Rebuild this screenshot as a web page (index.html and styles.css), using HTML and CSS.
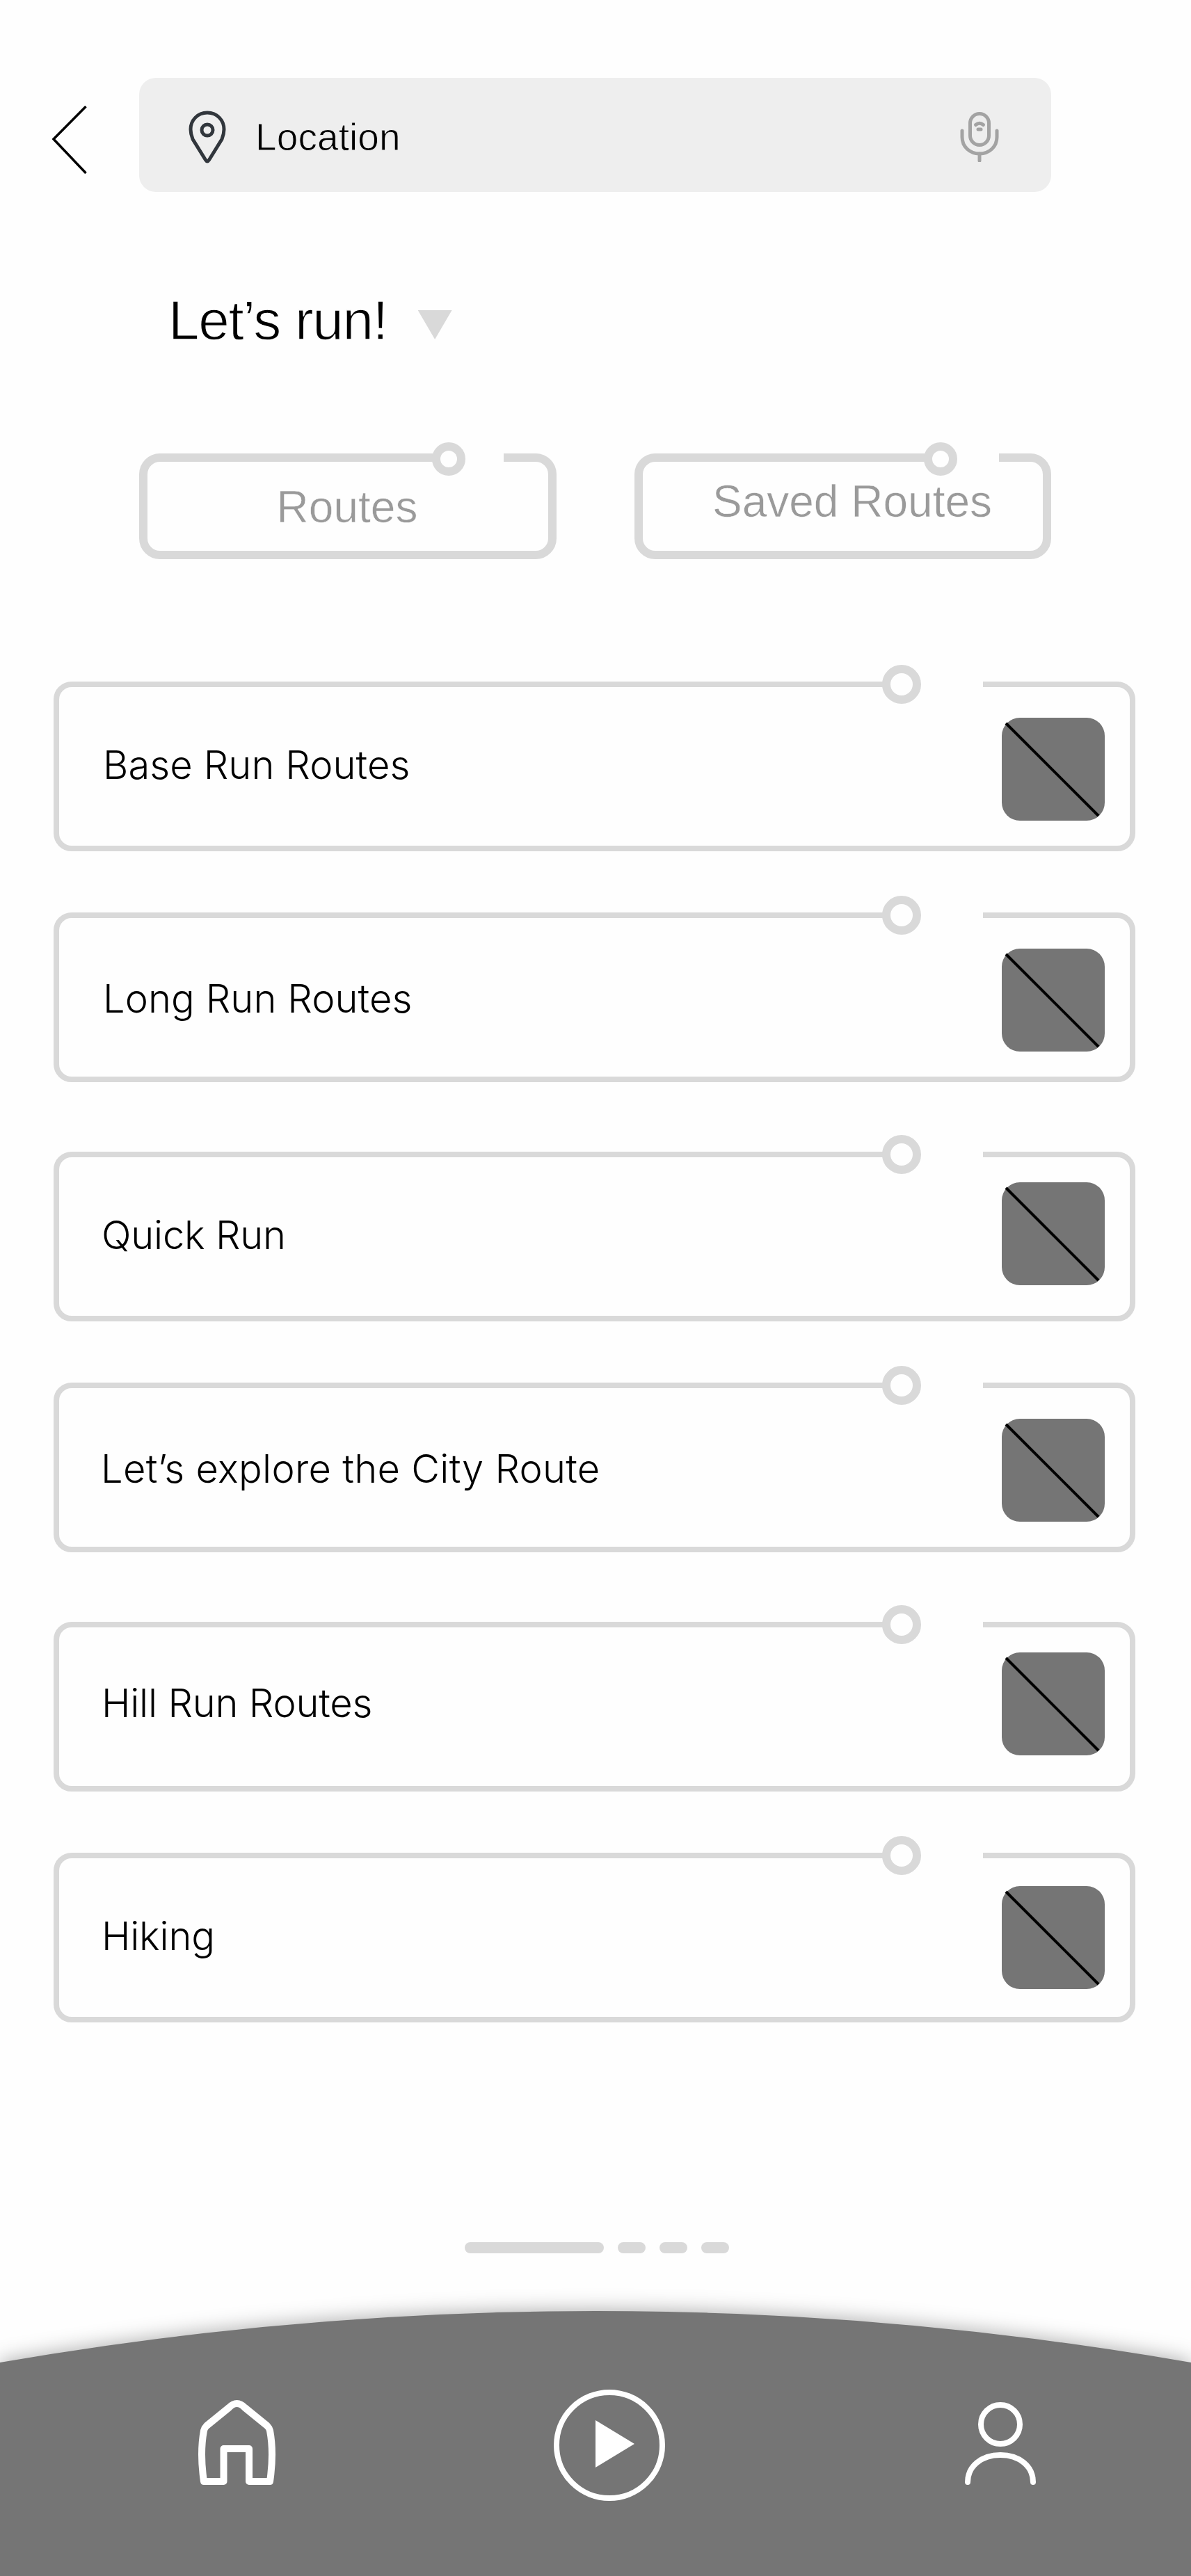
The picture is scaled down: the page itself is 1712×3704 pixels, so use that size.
FILE: index.html
```html
<!DOCTYPE html>
<html>

<head>
  <meta http-equiv="Content-Type" content="text/html; charset=utf-8" />
  <title>Let's run</title>
  <link rel="stylesheet" href="styles.css">
</head>

<body>
  <div class="page">
    <div class="top-bar">
      <svg class="back" viewBox="0 0 50 98">
        <path d="M48.5 1 L2 48 L48.5 97" />
      </svg>
      <div class="search">
        <svg class="pin" viewBox="0 0 56 76">
          <path d="M28 3 C14 3 4 14 4 27 C4 32 5 36 7 41 L25.5 71 Q28 75 30.5 71 L49 41 C51 36 52 32 52 27 C52 14 42 3 28 3Z" />
          <circle cx="28" cy="28" r="8" />
        </svg>
        <span class="search-text">Location</span>
        <svg class="mic" viewBox="0 0 56 72">
          <rect x="14.5" y="2.5" width="27" height="45" rx="13.5" />
          <path d="M3 27 V36 C3 50 14 60 28 60 C42 60 53 50 53 36 V27" />
          <path d="M28 60 V70" />
          <path d="M22.5 18.5 Q28 14 33.5 18.5" />
          <path d="M26 25 H30" />
        </svg>
      </div>
    </div>

    <div class="title-row">
      <h1 class="title">Let’s run!</h1>
      <div class="caret"></div>
    </div>

    <div class="tabs">
      <div class="tab tab-routes">
        <span class="tab-gap"></span>
        <span class="tab-ring"></span>
        <span class="tab-label">Routes</span>
      </div>
      <div class="tab tab-saved">
        <span class="tab-gap"></span>
        <span class="tab-ring"></span>
        <span class="tab-label">Saved Routes</span>
      </div>
    </div>

    <div class="route-list">
      <div class="route">
        <span class="route-gap"></span>
        <span class="route-ring"></span>
        <span class="route-name name-wide name-up">Base Run Routes</span>
        <svg class="thumb thumb-down" viewBox="0 0 148 148"><rect width="148" height="148" rx="26" /><line x1="6" y1="8" x2="139" y2="141" /></svg>
      </div>
      <div class="route">
        <span class="route-gap"></span>
        <span class="route-ring"></span>
        <span class="route-name name-wide name-down">Long Run Routes</span>
        <svg class="thumb thumb-down" viewBox="0 0 148 148"><rect width="148" height="148" rx="26" /><line x1="6" y1="8" x2="139" y2="141" /></svg>
      </div>
      <div class="route">
        <span class="route-gap"></span>
        <span class="route-ring"></span>
        <span class="route-name name-up name-tight">Quick Run</span>
        <svg class="thumb thumb-up" viewBox="0 0 148 148"><rect width="148" height="148" rx="26" /><line x1="6" y1="8" x2="139" y2="141" /></svg>
      </div>
      <div class="route">
        <span class="route-gap"></span>
        <span class="route-ring"></span>
        <span class="route-name name-down">Let’s explore the City Route</span>
        <svg class="thumb thumb-down" viewBox="0 0 148 148"><rect width="148" height="148" rx="26" /><line x1="6" y1="8" x2="139" y2="141" /></svg>
      </div>
      <div class="route">
        <span class="route-gap"></span>
        <span class="route-ring"></span>
        <span class="route-name name-higher name-tight">Hill Run Routes</span>
        <svg class="thumb thumb-up" viewBox="0 0 148 148"><rect width="148" height="148" rx="26" /><line x1="6" y1="8" x2="139" y2="141" /></svg>
      </div>
      <div class="route">
        <span class="route-gap"></span>
        <span class="route-ring"></span>
        <span class="route-name name-up name-tight">Hiking</span>
        <svg class="thumb" viewBox="0 0 148 148"><rect width="148" height="148" rx="26" /><line x1="6" y1="8" x2="139" y2="141" /></svg>
      </div>
    </div>

    <div class="pager">
      <span class="pill pill-active"></span>
      <span class="pill"></span>
      <span class="pill"></span>
      <span class="pill"></span>
    </div>

    <div class="nav">
      <svg class="nav-bg" viewBox="0 0 1712 381">
        <path d="M0 74 A4988 4988 0 0 1 1712 74 V381 H0 Z" />
      </svg>
      <svg class="nav-home" viewBox="0 0 111 122">
        <path d="M8 117 Q2 76 8 44 Q9 40 12 37 L44 11 Q55.5 -1 67 11 L99 37 Q102 40 103 44 Q109 76 103 117 H73 V70 H36.5 V117 Z" />
      </svg>
      <svg class="nav-play" viewBox="0 0 160 160">
        <circle cx="80" cy="80" r="76" />
        <polygon points="60,44 116,78 60,112" />
      </svg>
      <svg class="nav-user" viewBox="0 0 102 119">
        <circle cx="51" cy="32" r="28" />
        <path d="M4 115 C4 92 24 76 51 76 C78 76 98 92 98 115" />
      </svg>
    </div>
  </div>
</body>

</html>
```

FILE: styles.css
```css
body {
  margin: 0;
  background: #fefefe;
  font-family: "Liberation Sans", Arial, sans-serif;
}

.page {
  display: flex;
  flex-direction: column;
  width: 1712px;
  height: 3704px;
  overflow: hidden;
}

/* top bar */
.top-bar {
  display: flex;
  align-items: flex-start;
  padding: 112px 0 0 75px;
}

.back {
  width: 50px;
  height: 98px;
  margin: 40px 75px 0 0;
  fill: none;
  stroke: #000;
  stroke-width: 3.5;
}

.search {
  display: flex;
  align-items: center;
  box-sizing: border-box;
  width: 1311px;
  height: 164px;
  padding: 6px 75px 0 70px;
  background: #eeeeee;
  border-radius: 24px;
}

.pin {
  width: 56px;
  height: 76px;
  margin-right: 41px;
  fill: none;
  stroke: #31363c;
  stroke-width: 5;
}

/* the reference face is a light cut, the stroke thins the regular one */
.search-text {
  font-size: 55px;
  letter-spacing: .1px;
  color: #000;
  -webkit-text-stroke: .9px #eeeeee;
}

.mic {
  width: 56px;
  height: 72px;
  margin-left: auto;
  fill: none;
  stroke: #a3a3a3;
  stroke-width: 5;
  stroke-linecap: round;
}

/* title */
.title-row {
  display: flex;
  align-items: center;
  margin: 140px 0 0 242px;
}

.title {
  margin: 0;
  font-size: 80px;
  font-weight: normal;
  line-height: 90px;
  letter-spacing: -1.3px;
  color: #000;
  -webkit-text-stroke: 1.3px #fefefe;
}

.caret {
  width: 49px;
  height: 42px;
  margin: 12px 0 0 44px;
  background: #d9d9d9;
  clip-path: polygon(0 0, 100% 0, 50% 100%);
}

/* tabs */
.tabs {
  display: flex;
  gap: 112px;
  margin: 146px 0 0 200px;
}

.tab {
  position: relative;
  display: flex;
  align-items: center;
  justify-content: center;
  box-sizing: border-box;
  height: 152px;
  border: 12px solid #d9d9d9;
  border-radius: 30px;
}

.tab-routes {
  width: 600px;
}

.tab-saved {
  width: 599px;
}

.tab-gap {
  position: absolute;
  top: -12px;
  height: 12px;
  background: #fefefe;
}

.tab-routes .tab-gap {
  left: 432px;
  width: 80px;
}

.tab-saved .tab-gap {
  left: 428px;
  width: 84px;
}

.tab-ring {
  position: absolute;
  top: -28px;
  box-sizing: border-box;
  width: 48px;
  height: 48px;
  background: #fefefe;
  border: 12px solid #d9d9d9;
  border-radius: 50%;
}

.tab-routes .tab-ring {
  left: 409px;
}

.tab-saved .tab-ring {
  left: 404px;
}

.tab-label {
  font-size: 64px;
  color: #9a9a9a;
  -webkit-text-stroke: .6px #fefefe;
}

.tab-routes .tab-label {
  margin: 2px 0 0 -2px;
}

.tab-saved .tab-label {
  margin: 0 0 15px 27px;
}

/* route cards */
.route-list {
  display: flex;
  flex-direction: column;
  gap: 88px;
  margin: 176px 0 0 77px;
}

.route {
  position: relative;
  display: flex;
  align-items: center;
  box-sizing: border-box;
  width: 1555px;
  height: 244px;
  padding-right: 36px;
  border: 8px solid #d9d9d9;
  border-radius: 26px;
}

.route:nth-child(2),
.route:nth-child(4) {
  margin-bottom: 12px;
}

.route-gap {
  position: absolute;
  top: -8px;
  left: 1211px;
  width: 117px;
  height: 8px;
  background: #fefefe;
}

.route-ring {
  position: absolute;
  top: -32px;
  left: 1183px;
  box-sizing: border-box;
  width: 56px;
  height: 56px;
  background: #fefefe;
  border: 12px solid #d9d9d9;
  border-radius: 50%;
}

.route-name {
  flex: 1;
  padding-left: 60px;
  font-family: Inter, "Liberation Sans", sans-serif;
  font-size: 56px;
  font-weight: 300;
  letter-spacing: .3px;
  color: #000;
}

.name-wide {
  padding-left: 63px;
  letter-spacing: .1px;
}

.name-tight {
  letter-spacing: -.2px;
  padding-left: 61px;
}

.name-up {
  margin-bottom: 4px;
}

.name-higher {
  margin-bottom: 10px;
}

.name-down {
  margin-top: 4px;
}

.thumb {
  width: 148px;
  height: 148px;
  fill: #757575;
  stroke: none;
}

.thumb line {
  stroke: #000;
  stroke-width: 4;
}

.thumb-up {
  margin-bottom: 8px;
}

.thumb-down {
  margin-top: 8px;
}

/* pager */
.pager {
  display: flex;
  gap: 20px;
  margin: 316px 0 0 668px;
}

.pill {
  width: 40px;
  height: 16px;
  background: #d9d9d9;
  border-radius: 8px;
}

.pill-active {
  width: 200px;
}

/* bottom nav */
.nav {
  position: relative;
  display: flex;
  align-items: flex-start;
  height: 381px;
  margin-top: 83px;
  padding: 113px 0 0 285px;
  box-sizing: border-box;
}

.nav-bg {
  position: absolute;
  top: 0;
  left: 0;
  width: 1712px;
  height: 381px;
  overflow: visible;
  fill: #757575;
  filter: drop-shadow(0 -2px 14px rgba(0, 0, 0, .3));
}

.nav-home,
.nav-play,
.nav-user {
  position: relative;
  fill: none;
  stroke: #fff;
  stroke-linecap: round;
  stroke-linejoin: round;
}

.nav-home {
  width: 111px;
  height: 122px;
  margin-top: 15px;
  stroke-width: 10;
}

.nav-play {
  width: 160px;
  height: 160px;
  margin-left: 400px;
  stroke-width: 8;
}

.nav-play polygon {
  fill: #fff;
  stroke: none;
}

.nav-user {
  width: 102px;
  height: 119px;
  margin: 18px 0 0 431px;
  stroke-width: 8;
}
```
